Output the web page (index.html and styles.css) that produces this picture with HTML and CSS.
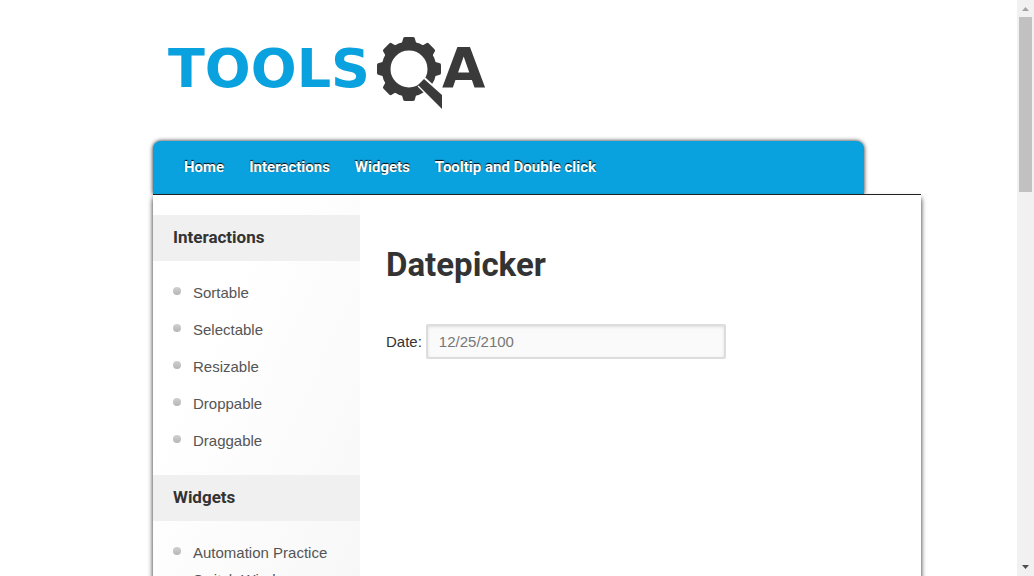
FILE: index.html
```html
<!DOCTYPE html>
<html lang="en">
<head>
<meta charset="utf-8">
<title>Datepicker | ToolsQA</title>
<link rel="stylesheet" href="styles.css">
</head>
<body>
<div class="viewport">
  <div class="page">
    <header class="site-header">
      <a class="logo" href="#" aria-label="ToolsQA">
        <svg width="330" height="80" viewBox="160 32 330 80">
          <text class="logo-blue" x="168" y="87">TOOLS</text>
          <g class="logo-dark">
            <circle class="gear-ring" cx="409" cy="69" r="23"/>
            <g id="teeth">
              <path id="tooth" d="M401 46 L403 39 Q403 37 405 37 H413 Q415 37 415 39 L417 46Z"/>
              <use href="#tooth" transform="rotate(45 409 69)"/>
              <use href="#tooth" transform="rotate(90 409 69)"/>
              <use href="#tooth" transform="rotate(180 409 69)"/>
              <use href="#tooth" transform="rotate(225 409 69)"/>
              <use href="#tooth" transform="rotate(270 409 69)"/>
              <use href="#tooth" transform="rotate(315 409 69)"/>
            </g>
            <path class="handle-gap" d="M424 79 L447 100 M419 85 L442 108"/>
            <path d="M424 79 L442 95 V109 L418 85Z"/>
          </g>
          <text class="logo-letter" x="442" y="87">A</text>
        </svg>
      </a>
    </header>
    <nav class="main-nav">
      <a href="#">Home</a>
      <a href="#">Interactions</a>
      <a href="#">Widgets</a>
      <a href="#">Tooltip and Double click</a>
    </nav>
    <div class="content">
      <aside class="sidebar">
        <h2>Interactions</h2>
        <ul>
          <li><a href="#">Sortable</a></li>
          <li><a href="#">Selectable</a></li>
          <li><a href="#">Resizable</a></li>
          <li><a href="#">Droppable</a></li>
          <li><a href="#">Draggable</a></li>
        </ul>
        <h2>Widgets</h2>
        <ul>
          <li><a href="#">Automation Practice Switch Windows</a></li>
        </ul>
      </aside>
      <main class="main">
        <h1>Datepicker</h1>
        <div class="field">
          <label for="date">Date:</label>
          <input id="date" type="text" value="12/25/2100">
        </div>
      </main>
    </div>
  </div>
  <div class="scrollbar" aria-hidden="true">
    <svg width="17" height="17" viewBox="0 0 17 17"><path fill="#a3a3a3" d="M5 11 L8.500 7 L12 11Z"/></svg>
    <div class="track"><div class="thumb"></div></div>
    <svg width="17" height="17" viewBox="0 0 17 17"><path fill="#505050" d="M5 6 H12 L8.500 10Z"/></svg>
  </div>
</div>
</body>
</html>
```
FILE: styles.css
```css
* { box-sizing: border-box; }
body {
  margin: 0;
  background: #fff;
  color: #333;
  font: 15px/26px "Liberation Sans", Arial, sans-serif;
}
.viewport { display: flex; height: 100vh; overflow: hidden; }
.page {
  flex: 1;
  display: flex;
  flex-direction: column;
  padding: 0 96px 0 153px;
}
.site-header { padding: 32px 0 29px 7px; }
.logo { display: block; height: 80px; }
.logo svg { display: block; }
.logo-blue, .logo-letter { font: bold 54px "DejaVu Sans", sans-serif; }
.logo-letter { font-size: 56px; }
.logo-blue { fill: #09a1de; }
.logo-dark, .logo-letter { fill: #3a3a3a; }
.gear-ring { fill: none; stroke: #3a3a3a; stroke-width: 9; }
.handle-gap { fill: none; stroke: #fff; stroke-width: 4; }

.main-nav {
  display: flex;
  gap: 25px;
  margin-right: 57px;
  padding: 0 31px;
  border-radius: 8px 8px 0 0;
  background: #09a1de;
  box-shadow: 0 0 4px #222;
}
.main-nav a {
  color: #fff;
  font: bold 15px/53px Roboto, sans-serif;
  text-decoration: none;
  text-shadow: 0 -1px 1px #000;
}
.content {
  position: relative;
  flex: 1;
  display: flex;
  border-top: 1px solid #222;
  background: #fff;
  box-shadow: 0 4px 5px #222;
}
.sidebar {
  flex: 0 0 207px;
  padding-top: 20px;
  background: linear-gradient(115deg, #fff 30%, #f7f7f7);
}
.sidebar h2 {
  margin: 0;
  padding: 0 20px 2px;
  background: #f0f0f0;
  font: bold 17px/44px Roboto, sans-serif;
}
.sidebar ul { margin: 0; padding: 13px 20px 16px; list-style: none; }
.sidebar li { display: flex; gap: 12px; padding: 5px 0; line-height: 27px; }
.sidebar li::before {
  content: "";
  flex: 0 0 8px;
  height: 8px;
  margin-top: 8px;
  border-radius: 50%;
  background: linear-gradient(#d0d0d0, #b5b5b5);
}
.sidebar a { color: #555; text-decoration: none; }
.main { flex: 1; padding: 46px 26px; }
.main h1 { margin: 0 0 35px; font: bold 33px/48px Roboto, sans-serif; }
.field { display: flex; align-items: center; gap: 4px; }
.field input {
  width: 300px;
  height: 35px;
  padding: 0 11px;
  border: 2px solid #ddd;
  border-radius: 2px;
  background: #fafafa;
  box-shadow: inset 0 1px 3px #ddd;
  color: #777;
  font: inherit;
}
.scrollbar {
  flex: 0 0 17px;
  display: flex;
  flex-direction: column;
  background: #f1f1f1;
}
.scrollbar svg { display: block; }
.track { flex: 1; padding: 0 2px; }
.thumb { height: 175px; background: #c1c1c1; }
```
